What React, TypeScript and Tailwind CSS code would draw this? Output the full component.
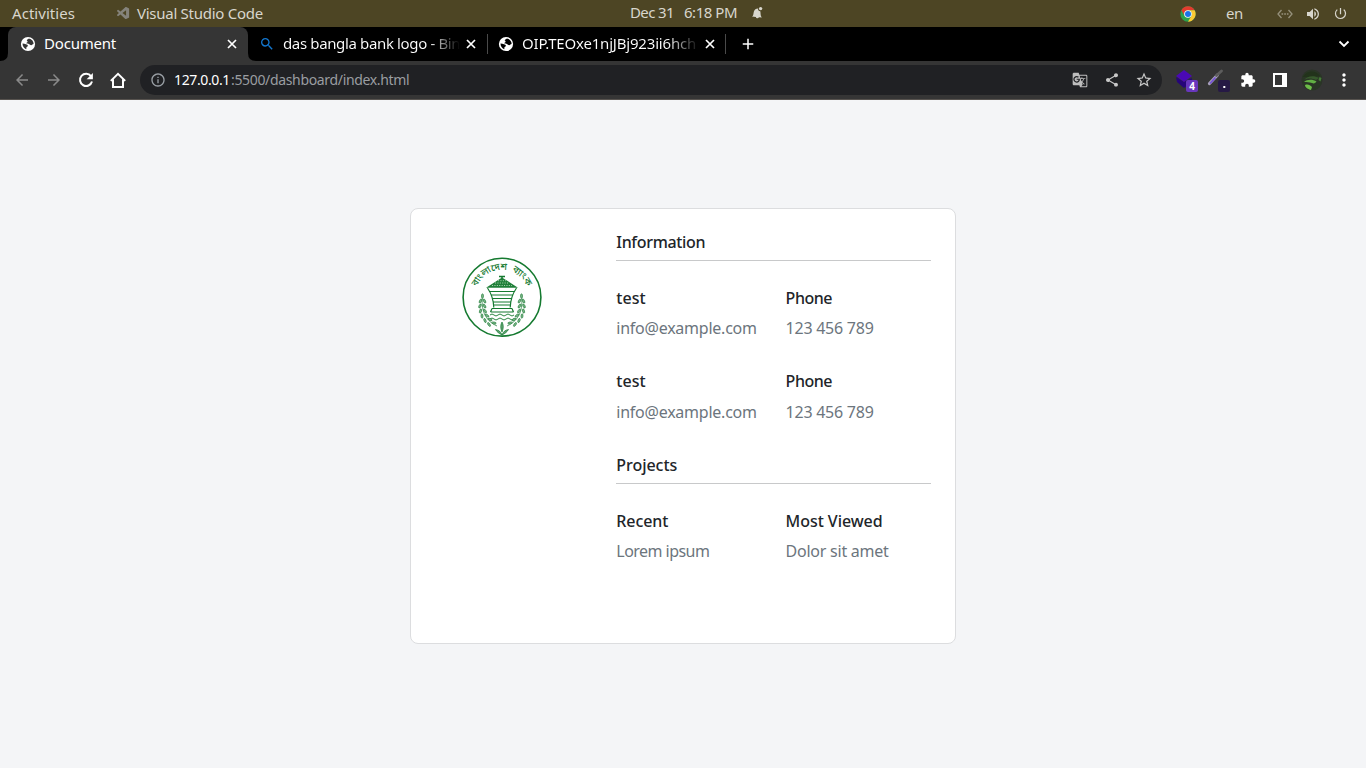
import type { ReactNode } from "react";
import {
  MdArrowBack,
  MdArrowForward,
  MdInfoOutline,
  MdGTranslate,
  MdShare,
  MdStarBorder,
  MdExtension,
  MdMoreVert,
  MdAdd,
  MdSearch,
  MdPowerSettingsNew,
  MdVolumeUp,
} from "react-icons/md";
import { VscVscode } from "react-icons/vsc";

function Chrome() {
  return (
    <svg width="16" height="16" viewBox="0 0 48 48">
      <circle cx="24" cy="24" r="23" fill="#2ba24c" />
      <path d="M4 12.5A23 23 0 0 1 43.9 12.5H24A11.5 11.5 0 0 0 14 29.8Z" fill="#e33b2e" />
      <path d="M43.9 12.5A23 23 0 0 1 24 47L34 29.8A11.5 11.5 0 0 0 24 12.5Z" fill="#fcc934" />
      <circle cx="24" cy="24" r="11.5" fill="#fff" />
      <circle cx="24" cy="24" r="9" fill="#1a73e8" />
    </svg>
  );
}

function TopBar() {
  return (
    <div className="grid h-[27px] grid-cols-[1fr_auto_1fr] items-center bg-[#4d4524] text-[15px] leading-[27px] text-[#d8d6cd]">
      <div className="flex items-center pl-3">
        <span className="w-[104px] tracking-[0.05px]">Activities</span>
        <VscVscode className="size-[15px] text-[#85837b]" />
        <span className="ml-1.5 tracking-[-0.27px]">Visual Studio Code</span>
      </div>
      <div className="flex h-[27px] items-center pb-0.5 pl-7 leading-[25px]">
        <span className="w-[54px] tracking-[-0.6px]">Dec 31</span>
        <span className="w-[66px] tracking-[-0.47px]">6:18 PM</span>
        <svg width="14" height="14" viewBox="0 0 14 14" fill="#d8d6cd">
          <path d="M2 10.6C3.6 9.6 3.3 7.5 3.9 5.4 4.5 3.3 6 2.4 7.9 2.4c0 1.6 1 2.7 2.4 2.9.5 1.8-.2 4.4 1.500 6.100L8.900 11.200C8.400 12.800 6.200 12.700 5.900 10.900Z" />
          <circle cx="10.600" cy="2.600" r="1.700" />
        </svg>
      </div>
      <div className="flex items-center justify-end pr-[18px]">
        <Chrome />
        <span className="ml-[30px] w-[51px] tracking-[-0.35px]">en</span>
        <svg width="16" height="10" viewBox="0 0 16 10" fill="none" stroke="#96917c" strokeWidth="1.3">
          <path d="M4.500 1 1 5l3.500 4M11.500 1 15 5l-3.500 4" />
          <path d="M4.500 5h7" strokeDasharray="1.700 1" />
        </svg>
        <MdVolumeUp className="ml-3 size-4" />
        <MdPowerSettingsNew className="ml-3 size-[15px]" />
      </div>
    </div>
  );
}

function Tab({ icon, children }: { icon: ReactNode; children: ReactNode }) {
  return (
    <div className="flex h-full w-[228px] items-center">
      {icon}
      <span className="ml-2 w-[177px] overflow-hidden pb-0.5 leading-8 whitespace-nowrap">{children}</span>
      <svg className="ml-1.5 shrink-0" width="10" height="10" viewBox="0 0 10 10" fill="none" stroke="#fff" strokeWidth="1.7">
        <path d="m1 1 8 8M9 1 1 9" />
      </svg>
    </div>
  );
}

function Globe({ hole }: { hole: string }) {
  return (
    <svg className="shrink-0" width="16" height="16" viewBox="0 0 16 16">
      <circle cx="8" cy="8" r="7.100" fill="#fff" />
      <path
        d="M8.800 2.400c-.3.900-1.800.8-2 1.900-.1.900.9.600.8 1.400-.1.700-1.300.7-1.200 1.500.1.700 1.700.2 2.600.8.900.500 1.200 1.300 2.200 1.200.900-.1.900-1.200 2.400-1.300C13.600 5.500 12 3 8.800 2.400ZM2.500 7.600c1.300.1 2.500.3 3.400.7 1.100.500 2 .5 2 1.500 0 1.100-1.400.8-1.500 1.700-.1.700.2 1.300-.3 1.700C4 12.400 2.500 10.300 2.500 7.600Z"
        fill={hole}
      />
    </svg>
  );
}

const fade = "block bg-linear-to-r from-white from-[82%] to-transparent bg-clip-text text-transparent";

function TabStrip() {
  return (
    <div className="flex h-[34px] items-center bg-black text-[15px] text-white">
      <svg width="8" height="34" viewBox="0 0 8 34">
        <path d="M0 34Q8 34 8 26V34Z" fill="#353535" />
      </svg>
      <div className="h-full w-60 rounded-t-lg bg-[#353535] pl-3">
        <Tab icon={<Globe hole="#353535" />}>
          <span className="tracking-[-0.2px]">Document</span>
        </Tab>
      </div>
      <svg width="8" height="34" viewBox="0 0 8 34">
        <path d="M8 34Q0 34 0 26V34Z" fill="#353535" />
      </svg>
      <div className="h-full w-[231px] pl-[3px]">
        <Tab icon={<MdSearch className="size-4 shrink-0 text-[#1377cf]" />}>
          <span className={`${fade} tracking-[-0.36px]`}>das bangla bank logo - Bin</span>
        </Tab>
      </div>
      <div className="h-5 w-px bg-[#4a4a4a]" />
      <div className="h-full w-[237px] pl-[10px]">
        <Tab icon={<Globe hole="#000" />}>
          <span className={`${fade} tracking-[-0.19px]`}>OIP.TEOxe1njJBj923ii6hch</span>
        </Tab>
      </div>
      <div className="h-5 w-px bg-[#4a4a4a]" />
      <MdAdd className="ml-[13px] size-[18px]" />
      <svg className="mr-4 ml-auto" width="12" height="8" viewBox="0 0 12 8" fill="none" stroke="#fff" strokeWidth="1.8">
        <path d="m1.500 1.500 4.500 4.500 4.500-4.500" />
      </svg>
    </div>
  );
}

function Toolbar() {
  return (
    <div className="flex h-[39px] items-center border-b border-[#57534f] bg-[#353535] pr-3 pl-[13px] text-white">
      <MdArrowBack className="size-[18px] text-[#8a8a8a]" />
      <MdArrowForward className="ml-[14px] size-[18px] text-[#8a8a8a]" />
      <svg className="ml-[15px]" width="16" height="16" viewBox="0 0 16 16">
        <path d="M13 4.200A6.100 6.100 0 1 0 14 9.500" fill="none" stroke="#fff" strokeWidth="2" />
        <path d="M14.900.900v6.300H8.600Z" fill="#fff" />
      </svg>
      <svg className="ml-4" width="16" height="17" viewBox="0 0 16 17" fill="none" stroke="#fff" strokeWidth="2">
        <path d="M.800 8.900 8 1.900l7.200 7M3 7.500V15h10V7.500" />
      </svg>
      <div className="ml-[14px] flex h-[30px] w-[1022px] items-center rounded-full bg-[#202124] pr-[9px] pl-[10px] text-sm">
        <MdInfoOutline className="size-4 text-[#9aa0a6]" />
        <span className="ml-2 w-[57px] tracking-[-0.37px] text-white">127.0.0.1</span>
        <span className="tracking-[-0.34px] text-[#9a9da1]">:5500/dashboard/index.html</span>
        <MdGTranslate className="ml-auto size-4 text-[#bdbdbd]" />
        <MdShare className="ml-4 size-4 text-[#c8c8c8]" />
        <MdStarBorder className="ml-[15px] size-[18px] text-[#c8c8c8]" />
      </div>
      <svg className="ml-[13px]" width="24" height="24" viewBox="0 0 24 24">
        <path d="m1 9 8 5 8-4v4l-8 6-7-6Z" fill="#26057a" />
        <path d="m9 2 8 6-8 6-8-6Z" fill="#4a08b5" />
        <rect x="11" y="12" width="12" height="12" rx="2" fill="#6837bd" />
        <text x="17" y="21.500" fontSize="10" fontWeight="700" textAnchor="middle" fill="#fff">4</text>
      </svg>
      <svg className="ml-2" width="24" height="24" viewBox="0 0 24 24">
        <path d="m2.500 15.500 8-8.500" stroke="#aaa3bc" strokeWidth="3.200" strokeLinecap="round" />
        <path d="m3 15.500 5.500-6" stroke="#7550d5" strokeWidth="1.800" />
        <path d="m9.500 7.500 5-4.500" stroke="#5d5d5d" strokeWidth="2.800" strokeLinecap="round" />
        <rect x="11" y="12" width="12" height="12" rx="2" fill="#261945" />
        <rect x="16.300" y="18" width="2" height="2" fill="#fff" />
      </svg>
      <MdExtension className="ml-[9px] size-4" />
      <svg className="ml-[17px]" width="14" height="14" viewBox="0 0 14 14">
        <path d="M0 0h14v14H0ZM2 2v10h7V2Z" fill="#fff" fillRule="evenodd" />
      </svg>
      <svg className="ml-[13px]" width="24" height="24" viewBox="0 0 24 24">
        <circle cx="12" cy="12" r="10.500" fill="#2a3526" />
        <path d="M3 9C6 3 15 1 20 8l-7 1Z" fill="#22331b" />
        <path d="M4 12C7 8 14 7 19 10l-3 2c-4-2-9-2-12 0Z" fill="#37592c" />
        <path d="M4 14c3-3 9-3 12.500-.500-1 1.500-2.500 2.500-4.500 1.500-3-1-5-1-8-1Z" fill="#62b044" />
        <path d="M5 17c3-1 5 0 7 2l-1 3c-3-.5-6-2.500-6-5Z" fill="#6dbd48" />
        <path d="m19.500 9 2 1-1 3.500-2-1.500Z" fill="#447c36" />
      </svg>
      <MdMoreVert className="ml-[10px] size-[20px]" />
    </div>
  );
}

const leaves = [
  [20.5, 39, 0],
  [18.5, 44, 25],
  [22.5, 44, -25],
  [18, 49, 25],
  [22.5, 49, -30],
  [18.5, 54, 15],
  [23, 54, -35],
  [20, 59, -5],
  [25, 58.5, -55],
  [23, 63.5, -20],
  [28, 62.5, -65],
  [27, 67.5, -35],
  [32, 66, -80],
];

function Branch() {
  return (
    <g>
      <path d="M20.500 38C19 52 22 63 35 69" fill="none" stroke="#1a7a33" strokeWidth="0.700" />
      {leaves.map(([x, y, r]) => (
        <ellipse key={`${x}-${y}`} cx={x} cy={y} rx="1" ry="2.200" transform={`rotate(${r} ${x} ${y})`} fill="#7db68a" stroke="#1a7a33" strokeWidth="0.600" />
      ))}
    </g>
  );
}

function BankLogo() {
  return (
    <svg width="80" height="80" viewBox="0 0 80 80" fill="none" stroke="#157a30">
      <circle cx="40" cy="40.200" r="38.900" strokeWidth="1.600" />
      <path id="arc" d="M14.800 30.200A27 27 0 0 1 65.200 30.200" stroke="none" />
      <text className="font-['Noto_Sans_Bengali','Noto_Sans',sans-serif]" fontSize="9.500" fontWeight="500" fill="#157a30" stroke="none">
        <textPath href="#arc" textLength="64">বাংলাদেশ&#160; ব্যাংক</textPath>
      </text>
      <path d="M37 19.500h6M40 19v3" strokeWidth="1.500" />
      <path d="m40 20.500 16 10.200H24Z" fill="#1f7f38" stroke="none" />
      <path d="M30 28.500h20M33 26h14M36 23.700h8" stroke="#b9dbc0" strokeWidth="0.900" strokeDasharray="1.100 1.300" />
      <path d="M25.500 31C29 36 31.500 43 31.800 50.500M54.500 31C51 36 48.500 43 48.200 50.500" strokeWidth="1.200" />
      <path d="M27 34.500h26M29 38h22M30 41.500h20M31 45h18M31.500 48h17" strokeWidth="1" />
      <path d="M30 51.500h20M28.500 55h23M30 51.500 28.500 55M50 51.500l1.500 3.500" strokeWidth="1.200" />
      <path d="M28 58q2-2 4 0t4 0 4 0 4 0 4 0 4 0M28 62q2-2 4 0t4 0 4 0 4 0 4 0 4 0" strokeWidth="0.900" />
      <Branch />
      <g transform="matrix(-1 0 0 1 80 0)">
        <Branch />
      </g>
      <path d="M40 65c-1.700 3-1.700 6 0 10 1.700-4 1.700-7 0-10ZM40 78c-1-3-3-5-6.500-5.500 1.500 2.500 3.500 4 6.500 5.500ZM40 78c1-3 3-5 6.500-5.500-1.500 2.500-3.500 4-6.500 5.500Z" fill="#5fa371" strokeWidth="0.700" />
    </svg>
  );
}

function Field({ label, value, labelCls, valueCls }: { label: string; value: string; labelCls: string; valueCls: string }) {
  return (
    <div className="mb-4">
      <h6 className={`mb-2 leading-[19.2px] font-medium ${labelCls}`}>{label}</h6>
      <p className={`mb-4 leading-6 text-[#6c757d] ${valueCls}`}>{value}</p>
    </div>
  );
}

function ContactRow() {
  return (
    <>
      <Field label="test" value="info@example.com" labelCls="tracking-[0.07px]" valueCls="tracking-[-0.24px]" />
      <Field label="Phone" value="123 456 789" labelCls="tracking-[-0.46px]" valueCls="tracking-[-0.25px]" />
    </>
  );
}

export default function App() {
  return (
    <div className="flex h-screen flex-col overflow-hidden bg-[#f4f5f7] font-['Noto_Sans',sans-serif]">
      <TopBar />
      <TabStrip />
      <Toolbar />
      <main className="flex flex-1 justify-center pt-[108px]">
        <div className="flex h-[436px] w-[546px] rounded-lg border border-[#dcdddf] bg-white text-base text-[#212529]">
          <div className="flex w-[181.300px] justify-center pt-12">
            <BankLogo />
          </div>
          <div className="flex-1 p-6">
            <h6 className="mb-2 leading-[19.2px] font-medium tracking-[-0.32px]">Information</h6>
            <hr className="mb-6 border-[#c8c9ca]" />
            <div className="grid grid-cols-[169.300px_1fr] pt-1">
              <ContactRow />
              <ContactRow />
            </div>
            <h6 className="mb-2 leading-[19.2px] font-medium tracking-[-0.04px]">Projects</h6>
            <hr className="mb-6 border-[#c8c9ca]" />
            <div className="grid grid-cols-[169.300px_1fr] pt-1">
              <Field label="Recent" value="Lorem ipsum" labelCls="tracking-[-0.08px]" valueCls="tracking-[-0.54px]" />
              <Field label="Most Viewed" value="Dolor sit amet" labelCls="tracking-[-0.05px]" valueCls="tracking-[-0.24px]" />
            </div>
          </div>
        </div>
      </main>
    </div>
  );
}
